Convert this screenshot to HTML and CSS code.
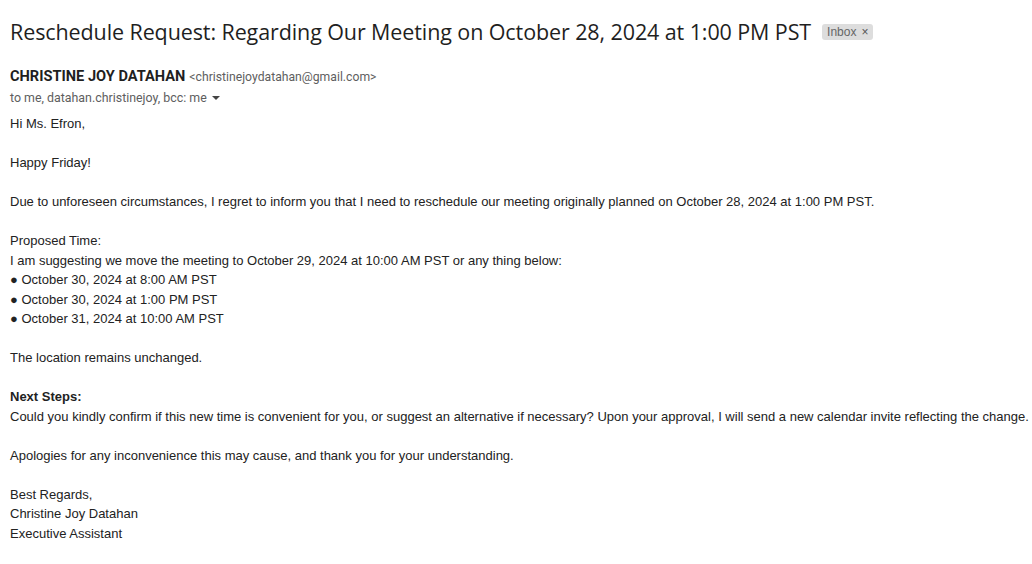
FILE: index.html
```html
<!DOCTYPE html>
<html>
<head>
<meta charset="utf-8">
<link rel="stylesheet" href="styles.css">
</head>
<body>
<div class="mail">
  <div class="subject-row">
    <h1 class="subject">Reschedule Request: Regarding Our Meeting on October 28, 2024 at 1:00 PM PST</h1>
    <span class="chip">Inbox <span class="chip-x">×</span></span>
  </div>
  <div class="sender-row">
    <span class="sender-name">CHRISTINE JOY DATAHAN</span>
    <span class="sender-email">&lt;christinejoydatahan@gmail.com&gt;</span>
  </div>
  <div class="recipients">to me, datahan.christinejoy, bcc: me <span class="caret"></span></div>
  <div class="body">
    <div>Hi Ms. Efron,</div>
    <br>
    <div>Happy Friday!</div>
    <br>
    <div>Due to unforeseen circumstances, I regret to inform you that I need to reschedule our meeting originally planned on October 28, 2024 at 1:00 PM PST.</div>
    <br>
    <div>Proposed Time:</div>
    <div>I am suggesting we move the meeting to October 29, 2024 at 10:00 AM PST or any thing below:</div>
    <div>● October 30, 2024 at 8:00 AM PST</div>
    <div>● October 30, 2024 at 1:00 PM PST</div>
    <div>● October 31, 2024 at 10:00 AM PST</div>
    <br>
    <div>The location remains unchanged.</div>
    <br>
    <div><b>Next Steps:</b></div>
    <div>Could you kindly confirm if this new time is convenient for you, or suggest an alternative if necessary? Upon your approval, I will send a new calendar invite reflecting the change.</div>
    <br>
    <div>Apologies for any inconvenience this may cause, and thank you for your understanding.</div>
    <br>
    <div>Best Regards,</div>
    <div>Christine Joy Datahan</div>
    <div>Executive Assistant</div>
  </div>
</div>
</body>
</html>
```
FILE: styles.css
```css
html, body {
  margin: 0;
  padding: 0;
  background: #fff;
}
.mail {
  padding: 16px 0 0 10px;
  width: 1040px;
}
.subject-row {
  display: flex;
  align-items: center;
  gap: 11px;
  height: 30px;
}
.subject {
  margin: 0;
  font-family: "Open Sans", sans-serif;
  font-weight: 400;
  font-size: 21.5px;
  color: #1f1f1f;
  white-space: nowrap;
  letter-spacing: -0.1px;
}
.chip {
  display: inline-flex;
  align-items: center;
  gap: 5px;
  background: #dddddd;
  color: #666;
  font-family: "Liberation Sans", Arial, sans-serif;
  font-size: 12px;
  height: 16px;
  padding: 0 5px;
  border-radius: 3px;
  margin-top: 2px;
}
.chip-x {
  font-size: 12px;
  color: #555;
}
.sender-row {
  margin-top: 21px;
  display: flex;
  align-items: baseline;
  gap: 4px;
  height: 20px;
}
.sender-name {
  font-family: Roboto, "Liberation Sans", sans-serif;
  font-weight: 700;
  font-size: 14.6px;
  color: #1f1f1f;
}
.sender-email {
  font-family: Roboto, "Liberation Sans", sans-serif;
  font-size: 12.2px;
  color: #5e5e5e;
}
.recipients {
  font-family: Roboto, "Liberation Sans", sans-serif;
  font-size: 12.4px;
  color: #5e5e5e;
  height: 20px;
  line-height: 20px;
  display: flex;
  align-items: center;
  gap: 5px;
  margin-top: 1px;
}
.caret {
  display: inline-block;
  width: 0;
  height: 0;
  border-left: 4px solid transparent;
  border-right: 4px solid transparent;
  border-top: 4px solid #444;
}
.body {
  margin-top: 6px;
  font-family: "Liberation Sans", Arial, sans-serif;
  font-size: 13px;
  line-height: 19.5px;
  color: #222;
  white-space: nowrap;
}
.body b {
  font-weight: 700;
}
```
